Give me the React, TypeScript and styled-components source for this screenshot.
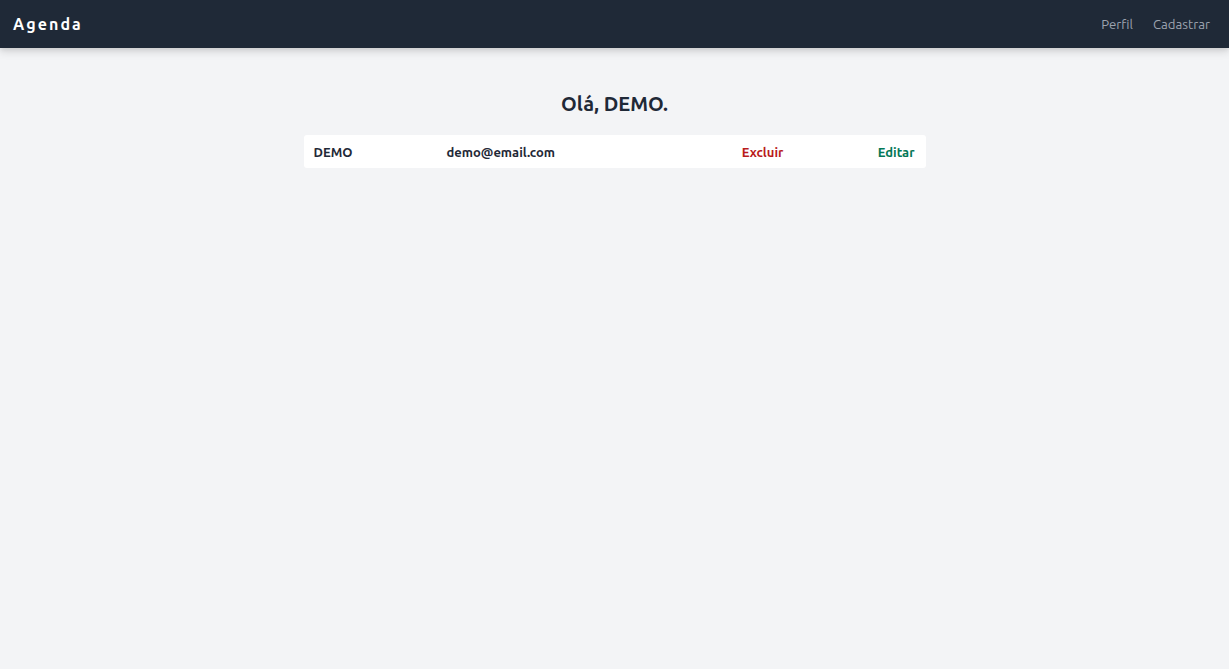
import React from "react";
import styled, { createGlobalStyle } from "styled-components";

const Global = createGlobalStyle`
  html, body { margin: 0; padding: 0; }
  body {
    background: #f3f4f6;
    font-family: "Ubuntu", "Noto Sans", "Open Sans", sans-serif;
    color: #1f2937;
    min-height: 669px;
  }
`;

const Nav = styled.nav`
  height: 48px;
  background: #1f2937;
  display: flex;
  align-items: center;
  justify-content: space-between;
  padding: 0 19px 0 13px;
  box-shadow: 0 4px 8px rgba(0, 0, 0, 0.12), 0 2px 4px rgba(0, 0, 0, 0.06);
  position: relative;
`;

const Brand = styled.a`
  color: #ffffff;
  font-weight: 700;
  font-size: 16px;
  letter-spacing: 0.13em;
  text-decoration: none;
`;

const Links = styled.div`
  display: flex;
  gap: 20px;
`;

const NavLink = styled.a`
  color: #9ca3af;
  font-size: 13.2px;
  text-decoration: none;
`;

const Main = styled.main`
  display: flex;
  flex-direction: column;
  align-items: center;
  padding-top: 42px;
`;

const Title = styled.h1`
  margin: 0 0 17px;
  font-size: 20px;
  line-height: 28px;
  font-weight: 700;
  color: #1f2937;
`;

const Card = styled.div`
  width: 622px;
  height: 33px;
  background: #ffffff;
  border-radius: 3px;
  display: grid;
  grid-template-columns: 133px 1fr 136px auto;
  align-items: center;
  padding: 0 11px 0 10px;
  box-sizing: border-box;
  font-size: 13px;
  font-weight: 700;
`;

const Cell = styled.span<{ $tone?: "red" | "green" }>`
  color: ${(p) => (p.$tone === "red" ? "#b91c1c" : p.$tone === "green" ? "#047857" : "#1f2937")};
`;

export default function App() {
  return (
    <>
      <Global />
      <Nav>
        <Brand>Agenda</Brand>
        <Links>
          <NavLink>Perfil</NavLink>
          <NavLink>Cadastrar</NavLink>
        </Links>
      </Nav>
      <Main>
        <Title>Olá, DEMO.</Title>
        <Card>
          <Cell>DEMO</Cell>
          <Cell>demo@email.com</Cell>
          <Cell $tone="red">Excluir</Cell>
          <Cell $tone="green">Editar</Cell>
        </Card>
      </Main>
    </>
  );
}
